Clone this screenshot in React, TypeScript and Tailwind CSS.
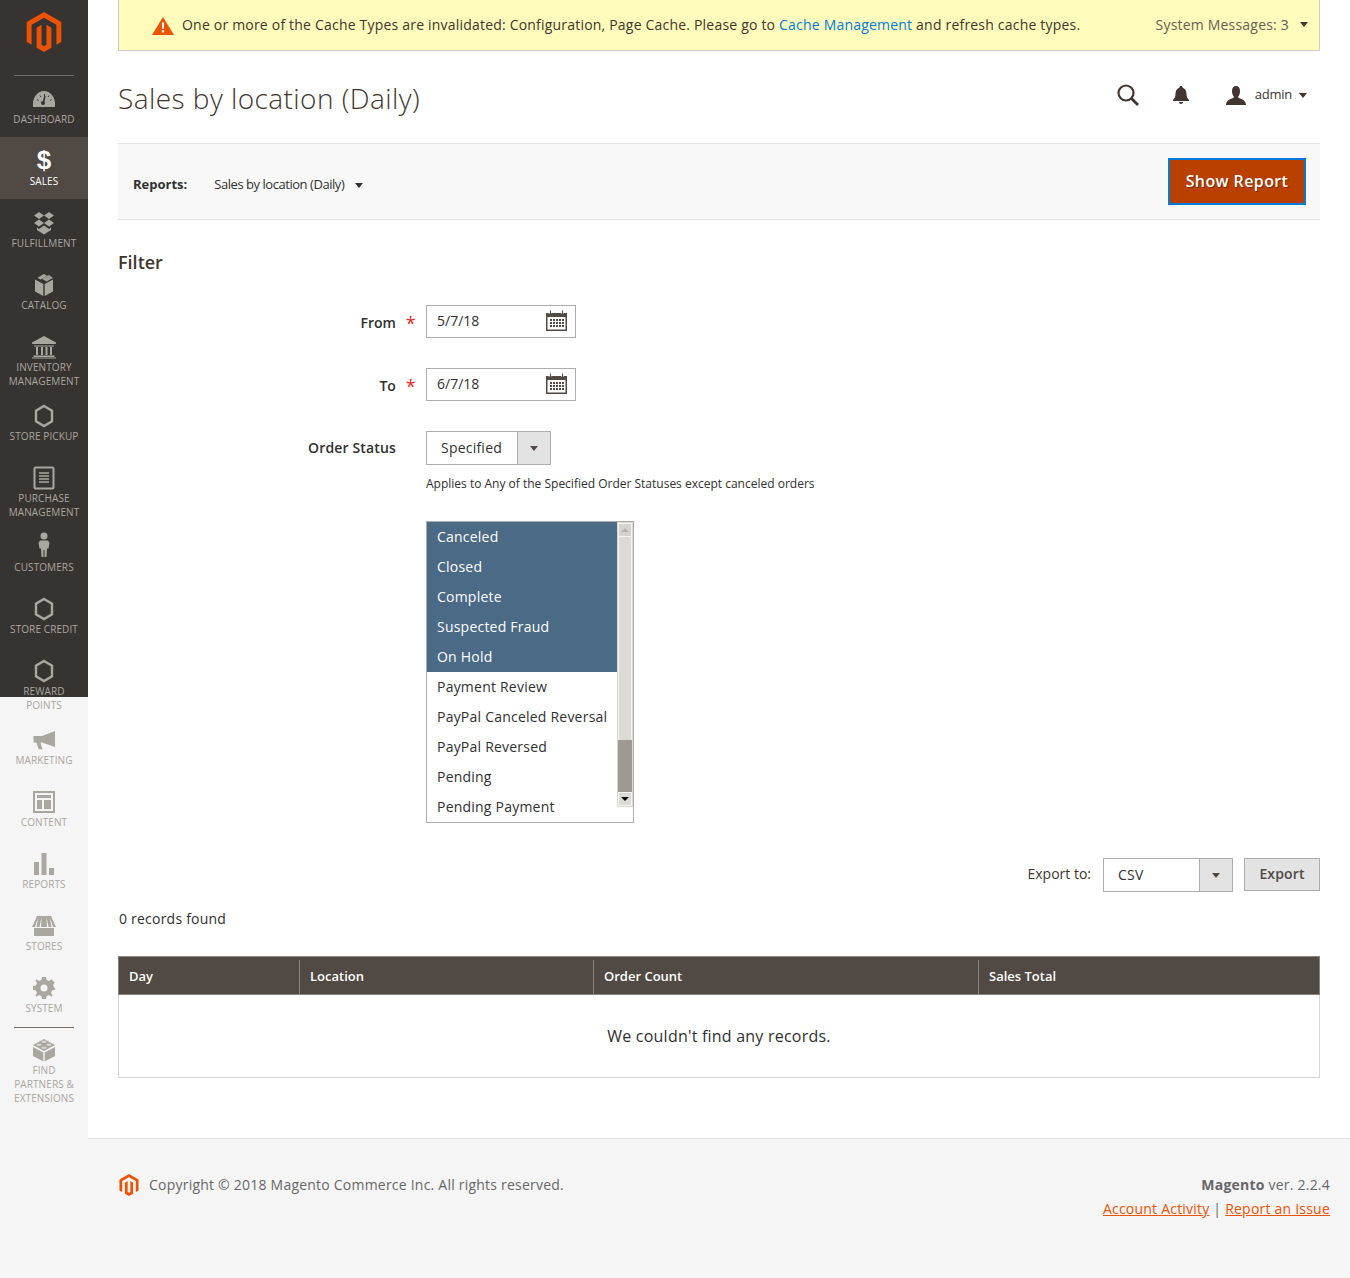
import type { ReactNode } from "react";

const MAGENTO_PATH =
  "M12 24l-4.455-2.572v-12l2.97-1.715v12.002l1.485.859 1.485-.859V7.713l2.97 1.715v12L12 24zM22.391 6v12l-2.969 1.714V7.713L12 3.43 4.574 7.713v12.001L1.609 18V6L12 0l10.391 6z";

const Hexagon = () => (
  <svg width="20" height="24" viewBox="0 0 20 24">
    <path d="M10 2 18 6.8V17.2L10 22 2 17.2V6.8Z" fill="none" stroke="currentColor" strokeWidth="2.4" />
  </svg>
);

const NAV: { label: string[]; icon: ReactNode; active?: boolean; dividerAfter?: boolean }[] = [
  {
    label: ["DASHBOARD"],
    icon: (
      <svg width="24" height="18" viewBox="0 0 24 18" fill="currentColor">
        <path d="M1 17C0 8 5 1 12 1s12 7 11 16Z" />
        <path d="M13 6 11.5 12" stroke="#373330" strokeWidth="1.6" />
        <circle cx="11" cy="13" r="2" fill="#373330" />
        <path d="M5 9.5 6.5 10.5M8 5.5 9 7M12.500 4V6M17 5.500 16 7M19.500 9.500 18 10.500" stroke="#373330" strokeWidth="1" />
      </svg>
    ),
  },
  {
    label: ["SALES"],
    active: true,
    icon: <span className="-mt-[2px] font-['Liberation_Sans',sans-serif] text-[26px] font-bold leading-[24px] text-white">$</span>,
  },
  {
    label: ["FULFILLMENT"],
    icon: (
      <svg width="24" height="24" viewBox="0 0 24 24" fill="currentColor">
        <path d="M7 1 12 4.500 7 8 2 4.500ZM17 1 22 4.500 17 8 12 4.500ZM7 8.500 12 12 7 15.500 2 12ZM17 8.500 22 12 17 15.500 12 12Z" />
        <path d="M5 16.500 7 18 12 14.500 17 18 19 16.500V19L12 23.500 5 19Z" />
      </svg>
    ),
  },
  {
    label: ["CATALOG"],
    icon: (
      <svg width="20" height="24" viewBox="0 0 20 24" fill="currentColor">
        <path d="M10 1 13 2.700 6.500 6.500 3.500 4.800Z" />
        <path d="M10 4.500 15 2 19 5 12.500 8.500 8 6Z" opacity=".9" />
        <path d="M1 6.500 9.300 11V23L1 18.500ZM19 6.500V18.500L10.700 23V11Z" />
      </svg>
    ),
  },
  {
    label: ["INVENTORY", "MANAGEMENT"],
    icon: (
      <svg width="26" height="24" viewBox="0 0 26 24" fill="currentColor">
        <path d="M13 1 25 7.500V9H1V7.500Z" />
        <path d="M3 10.500H23V11.500H3ZM5 12H7V20H5ZM10 12H12V20H10ZM14.500 12H16.500V20H14.500ZM19 12H21V20H19ZM2.500 20.500H23.500V22H2.500Z" />
        <path d="M1 22.500H25V23.500H1Z" />
      </svg>
    ),
  },
  { label: ["STORE PICKUP"], icon: <Hexagon /> },
  {
    label: ["PURCHASE", "MANAGEMENT"],
    icon: (
      <svg width="22" height="24" viewBox="0 0 22 24" fill="none" stroke="currentColor">
        <rect x="1.500" y="1.500" width="19" height="21" rx="1" strokeWidth="2" />
        <path d="M6 7H16M6 10H16M6 13H16M6 16H16" strokeWidth="1.500" />
      </svg>
    ),
  },
  {
    label: ["CUSTOMERS"],
    icon: (
      <svg width="14" height="26" viewBox="0 0 14 26" fill="currentColor" className="-mt-[4px]">
        <circle cx="7" cy="4" r="3.500" />
        <path d="M3 8.500H11L12.500 11 11.500 16.500H10L9.500 25H7.500V18H6.500V25H4.500L4 16.500H2.500L1.500 11Z" />
      </svg>
    ),
  },
  { label: ["STORE CREDIT"], icon: <Hexagon /> },
  { label: ["REWARD", "POINTS"], icon: <Hexagon /> },
  {
    label: ["MARKETING"],
    icon: (
      <svg width="24" height="20" viewBox="0 0 24 20" fill="currentColor">
        <path d="M23 1V17L10 12.500H8.500L10.500 19.500 6.500 19 4.500 12.500H1.500V6H10Z" />
      </svg>
    ),
  },
  {
    label: ["CONTENT"],
    icon: (
      <svg width="22" height="22" viewBox="0 0 22 22" fill="currentColor">
        <path
          fillRule="evenodd"
          d="M0 0H22V22H0ZM2 2V20H20V2ZM4 4H18V7H4ZM4 9H9V18H4ZM11 9H18V18H11Z"
        />
      </svg>
    ),
  },
  {
    label: ["REPORTS"],
    icon: (
      <svg width="20" height="22" viewBox="0 0 20 22" fill="currentColor">
        <path d="M0 9H5V22H0ZM7.500 0H12.500V22H7.500ZM15 15H20V22H15Z" />
      </svg>
    ),
  },
  {
    label: ["STORES"],
    icon: (
      <svg width="24" height="20" viewBox="0 0 24 20" fill="currentColor">
        <path d="M5 0H19L24 11H21L18 1.500 19.500 11H16.500L14.500 1.500 15 11H9L9.500 1.500 7.500 11H4.500L6 1.500 3 11H0Z" />
        <path d="M2 12H22V20H2Z" />
      </svg>
    ),
  },
  {
    label: ["SYSTEM"],
    icon: (
      <svg width="22" height="22" viewBox="0 0 22 22" fill="currentColor">
        <path
          fillRule="evenodd"
          d="M9 0H13L13.600 3 16 4 18.500 2.300 19.700 3.500 21.700 5.500 20 8 21 10.400 22 11V12.800L19 13.500 18 16 19.700 18.500 18.500 19.700 16 18 13.600 19 13 22H9L8.400 19 6 18 3.500 19.700 2.300 18.500 4 16 3 13.500 0 12.800V9L3 8.400 4 6 2.300 3.500 3.500 2.300 6 4 8.400 3ZM11 7.500A3.500 3.500 0 1 0 11 14.500 3.500 3.500 0 1 0 11 7.500Z"
        />
      </svg>
    ),
    dividerAfter: true,
  },
  {
    label: ["FIND", "PARTNERS &", "EXTENSIONS"],
    icon: (
      <svg width="24" height="24" viewBox="0 0 24 24" fill="currentColor">
        <path d="M12 1 23 7 12 13 1 7Z" />
        <path d="M1 9 11.300 14.500V23.500L1 18ZM23 9V18L12.700 23.500V14.500Z" />
        <ellipse cx="12" cy="3.800" rx="2.600" ry="1.300" fill="#f5f5f5" fillOpacity=".55" />
        <ellipse cx="7" cy="6.800" rx="2.600" ry="1.300" fill="#f5f5f5" fillOpacity=".55" />
        <ellipse cx="17" cy="6.800" rx="2.600" ry="1.300" fill="#f5f5f5" fillOpacity=".55" />
        <ellipse cx="12" cy="9.800" rx="2.600" ry="1.300" fill="#f5f5f5" fillOpacity=".55" />
      </svg>
    ),
  },
];

const STATUSES = [
  "Canceled",
  "Closed",
  "Complete",
  "Suspected Fraud",
  "On Hold",
  "Payment Review",
  "PayPal Canceled Reversal",
  "PayPal Reversed",
  "Pending",
  "Pending Payment",
];

const COLUMNS = [
  { label: "Day", width: "w-[181px]" },
  { label: "Location", width: "w-[294px]" },
  { label: "Order Count", width: "w-[385px]" },
  { label: "Sales Total", width: "flex-1" },
];

function Caret({ className = "" }: { className?: string }) {
  return <span className={`inline-block h-0 w-0 border-x-[4px] border-t-[5px] border-x-transparent ${className}`} />;
}

function Sidebar() {
  return (
    <aside className="flex w-[88px] shrink-0 flex-col bg-[linear-gradient(#373330_697px,#f5f5f5_697px)] text-[#aaa6a0]">
      <div className="flex h-[75px] items-start justify-center pt-3">
        <svg width="40" height="40" viewBox="0 0 24 24" fill="#eb5202">
          <path d={MAGENTO_PATH} />
        </svg>
      </div>
      <div className="mx-[14px] h-px bg-[#736e69]" />
      {NAV.map((item) => (
        <div key={item.label.join(" ")}>
          <div
            className={`flex flex-col items-center text-center ${item.active ? "bg-[#514943] text-white" : ""} ${
              item.label[0] === "DASHBOARD" ? "h-[61px] pt-[9px]" : item.label.length > 1 ? "h-[69px] pt-[10px]" : "h-[62px] pt-[10px]"
            }`}
          >
            <div className="flex h-[27px] items-center justify-center">{item.icon}</div>
            <div className={`text-[10px] leading-[14px] tracking-[0.01em] ${item.label.length === 3 ? "mt-[1px]" : ""}`}>
              {item.label.map((line) => (
                <div key={line}>{line}</div>
              ))}
            </div>
          </div>
          {item.dividerAfter && <div className="mx-[14px] mt-[1px] h-px bg-[#736e69]" />}
        </div>
      ))}
    </aside>
  );
}

function CalendarIcon() {
  return (
    <svg width="21" height="21" viewBox="0 0 21 21" className="-mt-[3px] text-[#514943]">
      <path d="M0 3H21V21H0Z" fill="currentColor" />
      <path d="M1.500 7H19.500V19.500H1.500Z" fill="#fff" />
      <path d="M4 3.500V1M16.500 3.500V1" stroke="#fff" strokeWidth="3" />
      <path d="M4.500 4.500V.5M16.500 4.500V.5" stroke="currentColor" strokeWidth="1" />
      <path
        d="M4 9H6V11H4ZM7 9H9V11H7ZM10 9H12V11H10ZM13 9H15V11H13ZM16 9H18V11H16ZM4 12H6V14H4ZM7 12H9V14H7ZM10 12H12V14H10ZM13 12H15V14H13ZM16 12H18V14H16ZM4 15H6V17H4ZM7 15H9V17H7ZM10 15H12V17H10ZM13 15H15V17H13ZM16 15H18V17H16Z"
        fill="currentColor"
      />
    </svg>
  );
}

function DateRow({ label, value }: { label: string; value: string }) {
  return (
    <div className="flex h-[33px] items-center">
      <div className="flex w-[308px] justify-end pr-[10px]">
        <span className="mt-[3px] text-[14px] font-semibold tracking-normal text-[#303030]">{label}</span>
        <span className="mt-[3px] ml-[10px] text-[18px] leading-[22px] text-[#e22626]">*</span>
      </div>
      <div className="flex h-[33px] w-[150px] items-center justify-between border border-[#adadad] pr-[8px] pl-[10px] text-[14px] tracking-normal text-[#303030]">
        <span className="pb-[2px]">{value}</span>
        <CalendarIcon />
      </div>
    </div>
  );
}

function SelectBox({ value, width, textWidth }: { value: string; width: string; textWidth: string }) {
  return (
    <div className={`flex h-[34px] border border-[#adadad] text-[14px] text-[#303030] ${width}`}>
      <div className={`flex items-center pb-[2px] pl-[14px] ${textWidth}`}>{value}</div>
      <div className="flex flex-1 items-center justify-center border-l border-[#adadad] bg-[#e3e3e3]">
        <Caret className="border-t-[#514943]" />
      </div>
    </div>
  );
}

function StatusList() {
  return (
    <div className="mt-[27px] ml-[308px] flex h-[302px] w-[208px] border border-[#adadad] text-[14px]">
      <div className="w-[190px]">
        {STATUSES.map((status, i) => (
          <div
            key={status}
            className={`flex h-[30px] items-center pb-[2px] pl-[10px] ${i < 5 ? "bg-[#4a6a85] text-white" : "text-[#303030]"}`}
          >
            {status}
          </div>
        ))}
      </div>
      <div className="flex h-[285px] w-[16px] flex-col border border-[#d9d7d2] bg-[#dcdad5]">
        <div className="flex h-[14px] items-center justify-center border border-[#f4f3f1] bg-[#d6d4cf]">
          <span className="h-0 w-0 border-x-[4px] border-b-[4px] border-x-transparent border-b-[#b5b3ae]" />
        </div>
        <div className="h-[203px] border-x border-[#f4f3f1] bg-[#dcdad5]" />
        <div className="flex-1 bg-[#9d9a91]" />
        <div className="flex h-[14px] items-center justify-center border border-[#f4f3f1] bg-[#dcdad5]">
          <span className="h-0 w-0 border-x-[4px] border-t-[4px] border-x-transparent border-t-black" />
        </div>
      </div>
    </div>
  );
}

export default function App() {
  return (
    <div className="flex min-h-[1278px] bg-white font-['Open_Sans',sans-serif] text-[14px] tracking-[0.22px] text-[#303030]">
      <Sidebar />
      <div className="flex min-w-0 flex-1 flex-col">
        <main className="flex-1 pr-[30px] pl-[30px]">
          <div className="flex h-[51px] items-center justify-between border-x border-b border-[#cccccc] bg-[#fffbbb] pr-[11px] pb-[2px] pl-[33px] tracking-[0.2px] text-[#41362f]">
            <div className="flex items-center">
              <svg width="22" height="18" viewBox="0 0 22 18" className="mt-[3px]">
                <path d="M11 0 22 18H0Z" fill="#eb5202" />
                <path d="M9.800 5.500H12.200L11.800 12H10.200Z M9.800 13.200H12.200V15.500H9.800Z" fill="#fff" />
              </svg>
              <span className="ml-[8px]">
                One or more of the Cache Types are invalidated: Configuration, Page Cache. Please go to{" "}
                <span className="text-[#007bdb]">Cache Management</span> and refresh cache types.
              </span>
            </div>
            <div className="flex items-center text-[#676056]">
              System Messages: 3
              <Caret className="ml-[11px] border-t-[#41362f]" />
            </div>
          </div>

          <div className="flex h-[92px] items-start justify-between">
            <h1 className="mt-[28px] text-[28px] leading-[38px] font-light tracking-[0.44px] text-[#41362f]">
              Sales by location (Daily)
            </h1>
            <div className="mt-[33px] flex items-center pr-[13px] text-[#41362f]">
              <svg width="22" height="22" viewBox="0 0 22 22" fill="none" stroke="currentColor" className="ml-[2px]">
                <circle cx="9" cy="9" r="7.500" strokeWidth="2.200" />
                <path d="M14.500 14.500 21 21" strokeWidth="2.800" />
              </svg>
              <svg width="16" height="18" viewBox="0 0 16 18" fill="currentColor" className="ml-[34px]">
                <path d="M8 0C9 0 9.700.7 9.700 1.700 12.400 2.500 13.500 5 13.500 8 13.500 11 14.500 12.500 16 14V15H0V14C1.500 12.500 2.500 11 2.500 8 2.500 5 3.600 2.500 6.300 1.700 6.300.7 7 0 8 0ZM6 16H10C10 17.200 9 18 8 18S6 17.200 6 16Z" />
              </svg>
              <svg width="20" height="19" viewBox="0 0 20 19" fill="currentColor" className="ml-[37px]">
                <path d="M10 0C12.800 0 14 2 14 5 14 8 13 10 12 11 13 13 20 13 20 19H0C0 13 7 13 8 11 7 10 6 8 6 5 6 2 7.200 0 10 0Z" />
              </svg>
              <span className="ml-[9px] text-[13px] tracking-[-0.02em]">admin</span>
              <Caret className="ml-[7px] border-t-[#41362f]" />
            </div>
          </div>

          <div className="flex h-[77px] items-center justify-between border-y border-[#e3e3e3] bg-[#f8f8f8] pr-[14px] pl-[15px]">
            <div className="flex items-center pt-[7px] text-[13px] tracking-normal">
              <span className="font-bold">Reports:</span>
              <span className="ml-[27px] tracking-[-0.035em]">Sales by location (Daily)</span>
              <Caret className="ml-[11px] border-t-[#303030]" />
            </div>
            <div className="flex h-[47px] w-[138px] items-center justify-center border-2 border-[#007bdb] bg-[#ba4000] pb-[2px] text-[16px] font-semibold tracking-[0.025em] text-white [text-shadow:1px_1px_0_rgba(0,0,0,0.35)]">
              Show Report
            </div>
          </div>

          <h2 className="mt-[28px] text-[18px] leading-[28px] font-semibold tracking-normal text-[#41362f]">Filter</h2>

          <div className="mt-[29px]">
            <DateRow label="From" value="5/7/18" />
            <div className="mt-[30px]">
              <DateRow label="To" value="6/7/18" />
            </div>
            <div className="mt-[30px] flex items-center">
              <div className="w-[308px] pr-[30px] pb-[2px] text-right text-[14px] font-semibold tracking-[0.15px]">Order Status</div>
              <SelectBox value="Specified" width="w-[125px]" textWidth="w-[90px]" />
            </div>
            <div className="mt-[9px] ml-[308px] text-[12px] leading-[20px] tracking-normal">
              Applies to Any of the Specified Order Statuses except canceled orders
            </div>
            <StatusList />
          </div>

          <div className="mt-[35px] flex items-start justify-end">
            <span className="mt-[5px] mr-[12px] tracking-normal text-[#41362f]">Export to:</span>
            <SelectBox value="CSV" width="w-[130px]" textWidth="w-[95px]" />
            <div className="ml-[11px] flex h-[33px] w-[76px] items-center justify-center border border-[#adadad] bg-[#e3e3e3] pb-[2px] font-semibold tracking-[0.01em] text-[#514943]">
              Export
            </div>
          </div>

          <div className="mt-[16px] pl-[1px] leading-[22px]">0 records found</div>

          <div className="mt-[26px] flex h-[39px] border border-[#8a837f] bg-[#514943] pt-[3px] text-[13px] font-semibold tracking-normal text-white">
            {COLUMNS.map((col, i) => (
              <div
                key={col.label}
                className={`flex items-center pl-[10px] ${col.width} ${i < 3 ? "border-r border-[#8a837f]" : ""}`}
              >
                {col.label}
              </div>
            ))}
          </div>
          <div className="flex h-[83px] items-center justify-center border-x border-b border-[#d6d6d6] text-[16px]">
            We couldn't find any records.
          </div>
        </main>

        <footer className="mt-[60px] flex h-[140px] justify-between border-t border-[#e3e3e3] bg-[#f5f5f5] pt-[34px] pr-[20px] pl-[30px] text-[#676767]">
          <div className="flex h-[24px] items-start">
            <svg width="22" height="24" viewBox="0 0 24 24" fill="#eb5202">
              <path d={MAGENTO_PATH} />
            </svg>
            <span className="ml-[9px] leading-[24px]">Copyright © 2018 Magento Commerce Inc. All rights reserved.</span>
          </div>
          <div className="text-right leading-[24px]">
            <div>
              <span className="font-bold">Magento</span> ver. 2.2.4
            </div>
            <div>
              <span className="text-[#eb5202] underline">Account Activity</span> |{" "}
              <span className="text-[#eb5202] underline">Report an Issue</span>
            </div>
          </div>
        </footer>
      </div>
    </div>
  );
}
